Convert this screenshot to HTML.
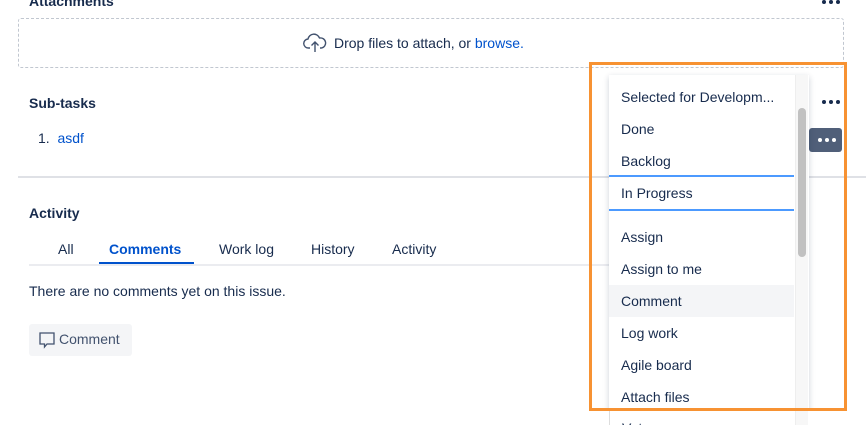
<!DOCTYPE html>
<html style="width:866px;height:425px;overflow:hidden"><head><meta charset="utf-8"><style>
*{margin:0;padding:0;box-sizing:border-box}
body{width:866px;height:425px;overflow:hidden;background:#fff;font-family:"Liberation Sans",sans-serif;color:#172b4d;position:relative;font-size:14px}
.a{position:absolute;white-space:nowrap}
h{position:absolute;font-weight:bold;font-size:14px;color:#172b4d}
.dots{position:absolute;display:flex;gap:3px}
.dots i{width:4px;height:4px;border-radius:50%;background:#172b4d;display:block}
.mi{position:absolute;left:609px;width:185px;height:32px;line-height:32px;padding-left:12px;font-size:14px;color:#172b4d}
</style></head><body>
<h style="left:29px;top:-7px">Attachments</h>
<div class="dots" style="left:822px;top:0px"><i></i><i></i><i></i></div>
<div class="a" style="left:18px;top:18px;width:826px;height:50px;border:1px dashed #c1c7d0;border-radius:3px"></div>
<svg class="a" style="left:303px;top:32px" width="24" height="22" viewBox="0 0 24 22" fill="none" stroke="#42526e" stroke-width="1.4"><path d="M7 16H5.5A4.5 4.5 0 0 1 5 7a6 6 0 0 1 11.5-1A4.8 4.8 0 0 1 18.5 16H17"/><path d="M12 20V10M8.5 13.5L12 10l3.5 3.5"/></svg>
<div class="a" style="left:334px;top:35px;font-size:14px">Drop files to attach, or <span style="color:#0052cc">browse.</span></div>
<h style="left:29px;top:95px">Sub-tasks</h>
<div class="dots" style="left:822px;top:100px"><i></i><i></i><i></i></div>
<div class="a" style="left:38px;top:130px">1.&nbsp;&nbsp;<span style="color:#0052cc">asdf</span></div>
<div class="a" style="left:809px;top:128px;width:33px;height:24px;background:#505f79;border-radius:3px"></div>
<div class="dots" style="left:818px;top:138px"><i style="background:#fff"></i><i style="background:#fff"></i><i style="background:#fff"></i></div>
<div class="a" style="left:18px;top:176px;width:848px;height:2px;background:#dfe1e6"></div>
<h style="left:29px;top:205px">Activity</h>
<div class="a" style="left:29px;top:264px;width:600px;height:2px;background:#ebecf0"></div>
<div class="a" style="left:58px;top:241px">All</div>
<div class="a" style="left:109px;top:241px;font-weight:bold;color:#0052cc">Comments</div>
<div class="a" style="left:99px;top:262px;width:95px;height:2px;background:#0052cc"></div>
<div class="a" style="left:219px;top:241px">Work log</div>
<div class="a" style="left:311px;top:241px">History</div>
<div class="a" style="left:392px;top:241px">Activity</div>
<div class="a" style="left:29px;top:283px">There are no comments yet on this issue.</div>
<div class="a" style="left:29px;top:324px;width:103px;height:32px;background:#f4f5f7;border-radius:3px"></div>
<svg class="a" style="left:38px;top:331px" width="18" height="18" viewBox="0 0 18 18" fill="none" stroke="#42526e" stroke-width="1.3"><path d="M2 2h14v11H9l-2.5 3V13H2z"/></svg>
<div class="a" style="left:59px;top:331px;color:#42526e">Comment</div>

<div class="a" style="left:609px;top:75px;width:200px;height:350px;background:#fff;box-shadow:0 2px 6px rgba(9,30,66,.2)"></div>
<div class="mi" style="top:81px">Selected for Developm...</div>
<div class="mi" style="top:113px">Done</div>
<div class="mi" style="top:145px">Backlog</div>
<div class="a" style="left:609px;top:175px;width:185px;height:2px;background:#4c9aff"></div>
<div class="mi" style="top:177px">In Progress</div>
<div class="a" style="left:609px;top:209px;width:185px;height:2px;background:#4c9aff"></div>
<div class="mi" style="top:221px">Assign</div>
<div class="mi" style="top:253px">Assign to me</div>
<div class="mi" style="top:285px;background:#f4f5f7">Comment</div>
<div class="mi" style="top:317px">Log work</div>
<div class="mi" style="top:349px">Agile board</div>
<div class="mi" style="top:381px">Attach files</div>
<div class="a" style="left:795px;top:75px;width:13px;height:350px;background:#f7f7f7;border-left:1px solid #eee"></div>
<div class="a" style="left:798px;top:108px;width:8px;height:149px;background:#c1c1c1;border-radius:4px"></div>
<div class="a" style="left:589px;top:62px;width:258px;height:349px;border:3px solid #f79232"></div>
<div class="a" style="left:0;top:411px;width:866px;height:14px;background:#fff;overflow:hidden"></div>
<div class="a" style="left:609px;top:411px;width:186px;height:14px;background:#fff;border-left:1px solid #ddd;overflow:hidden"><span style="position:absolute;left:12px;top:9px">Vote</span></div>
<div class="a" style="left:795px;top:411px;width:13px;height:14px;background:#f7f7f7;border-left:1px solid #eee"></div>
</body></html>
